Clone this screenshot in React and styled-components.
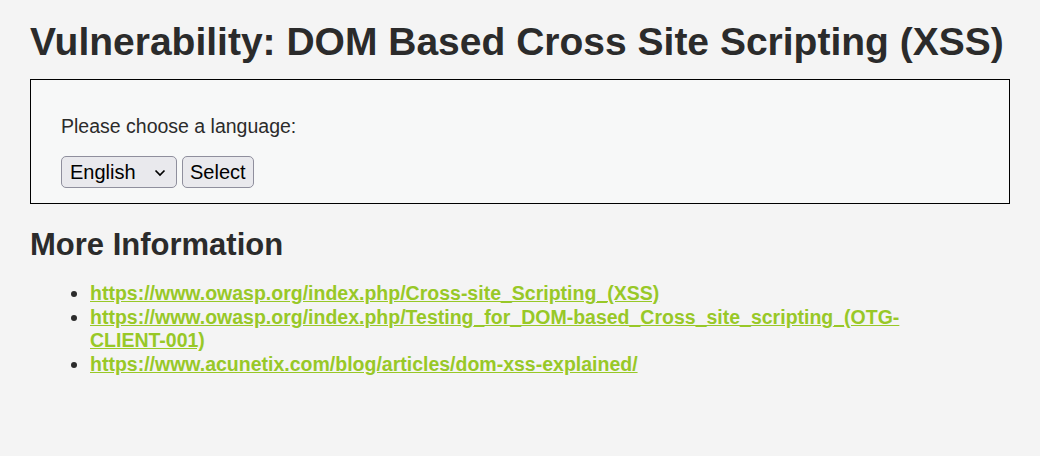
import React from "react";
import styled, { createGlobalStyle } from "styled-components";

const Global = createGlobalStyle`
  html, body { margin: 0; padding: 0; background: #f4f4f4; }
  body {
    font-family: "Liberation Sans", Arial, sans-serif;
    color: #2b2b2b;
    font-size: 19.5px;
  }
`;

const Page = styled.div`
  padding: 0 30px 0 30px;
  display: flex;
  flex-direction: column;
`;

const Title = styled.h1`
  margin: 16px 0 0 0;
  font-size: 39px;
  line-height: 52px;
  font-weight: bold;
  color: #2b2b2b;
`;

const Panel = styled.div`
  margin-top: 11px;
  width: 980px;
  box-sizing: border-box;
  border: 1px solid #000;
  background: #f7f8f8;
  padding: 35px 30px 15px 30px;
`;

const Prompt = styled.p`
  margin: 0 0 19px 0;
  line-height: 22px;
`;

const Controls = styled.form`
  display: flex;
  gap: 5px;
  align-items: center;
`;

const SelectWrap = styled.div`
  position: relative;
  display: inline-flex;
`;

const LangSelect = styled.select`
  appearance: none;
  -webkit-appearance: none;
  width: 116px;
  height: 32px;
  box-sizing: border-box;
  border: 1px solid #8f8f9d;
  border-radius: 5px;
  background: #e9e9ed;
  font-family: "Liberation Sans", Arial, sans-serif;
  font-size: 20px;
  color: #000;
  padding: 0 0 0 8px;
`;

const Chevron = styled.svg`
  position: absolute;
  right: 11px;
  top: 13px;
  pointer-events: none;
`;

const Button = styled.button`
  height: 32px;
  box-sizing: border-box;
  border: 1px solid #8f8f9d;
  border-radius: 5px;
  background: #e9e9ed;
  font-family: "Liberation Sans", Arial, sans-serif;
  font-size: 20px;
  color: #000;
  padding: 0 7px;
`;

const SubTitle = styled.h2`
  margin: 23px 0 0 0;
  font-size: 31px;
  line-height: 36px;
  font-weight: bold;
  color: #2b2b2b;
`;

const LinkList = styled.ul`
  margin: 19px 0 0 0;
  padding-left: 60px;
  width: 880px;
  box-sizing: border-box;
`;

const Item = styled.li`
  line-height: 23.5px;
`;

const Link = styled.a`
  color: #98c827;
  font-weight: bold;
  text-decoration: underline;
`;

const links = [
  "https://www.owasp.org/index.php/Cross-site_Scripting_(XSS)",
  "https://www.owasp.org/index.php/Testing_for_DOM-based_Cross_site_scripting_(OTG-CLIENT-001)",
  "https://www.acunetix.com/blog/articles/dom-xss-explained/",
];

export default function App() {
  return (
    <>
      <Global />
      <Page>
        <Title>Vulnerability: DOM Based Cross Site Scripting (XSS)</Title>
        <Panel>
          <Prompt>Please choose a language:</Prompt>
          <Controls onSubmit={(e) => e.preventDefault()}>
            <SelectWrap>
              <LangSelect defaultValue="English">
                <option>English</option>
                <option>French</option>
                <option>Spanish</option>
                <option>German</option>
              </LangSelect>
              <Chevron width="12" height="8" viewBox="0 0 12 8">
                <path d="M1.5 1.5 L6 6 L10.5 1.5" fill="none" stroke="#000" strokeWidth="1.7" />
              </Chevron>
            </SelectWrap>
            <Button type="submit">Select</Button>
          </Controls>
        </Panel>
        <SubTitle>More Information</SubTitle>
        <LinkList>
          {links.map((l) => (
            <Item key={l}>
              <Link href={l}>{l}</Link>
            </Item>
          ))}
        </LinkList>
      </Page>
    </>
  );
}
